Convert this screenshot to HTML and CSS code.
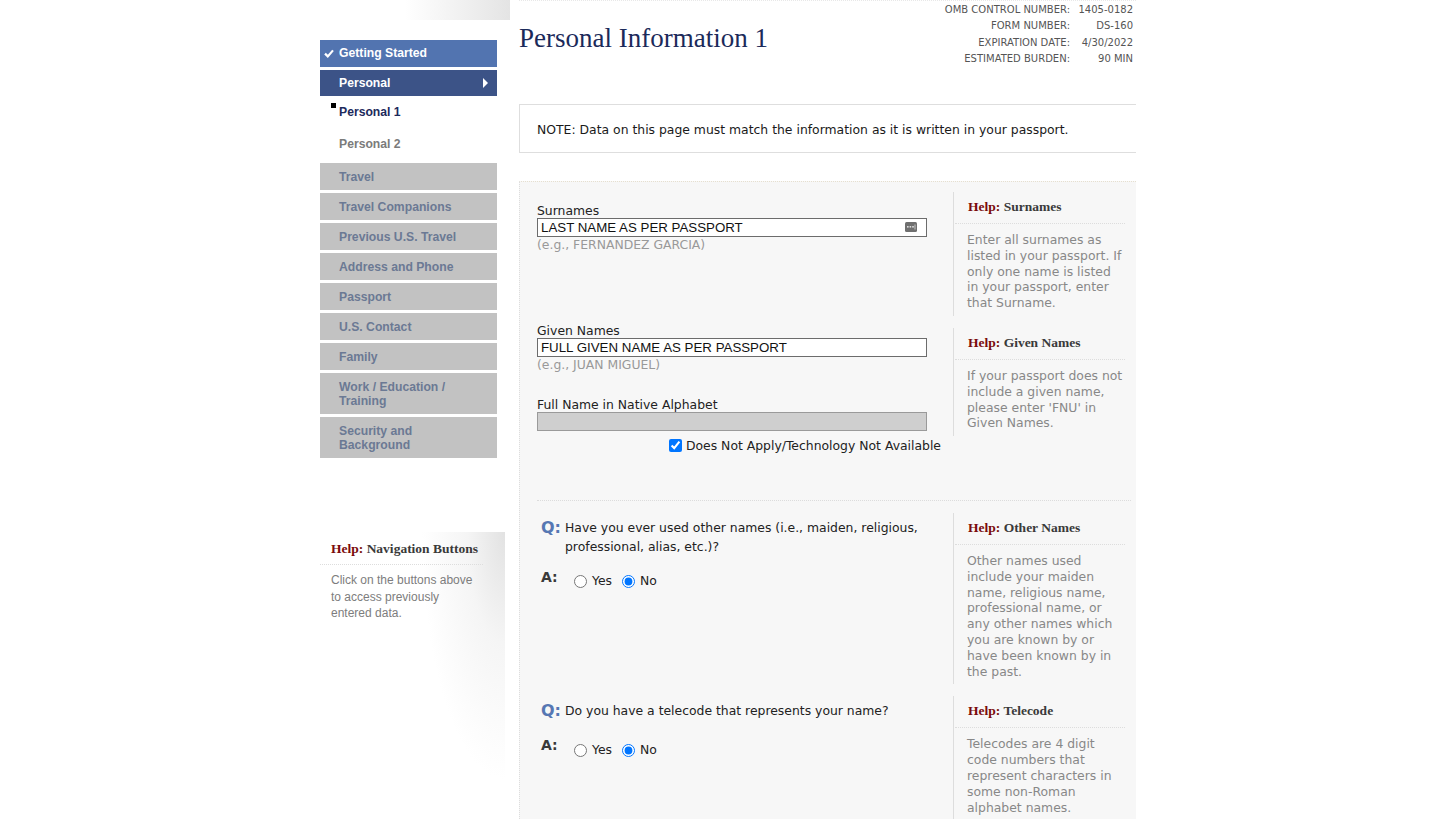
FILE: index.html
```html
<!DOCTYPE html>
<html lang="en">
<head>
    <meta charset="UTF-8">
    <title>DS-160 Personal Information 1</title>
    <link rel="stylesheet" href="styles.css">
</head>
<body>
    <div class="page">
        <aside class="sidebar">
            <div class="side-top"></div>
            <nav class="side-nav">
                <div class="nav-done">
                    <svg class="nav-check" width="10" height="9" viewBox="0 0 10 9"><path d="M1 4.6 L3.8 7.4 L9 1.4" fill="none" stroke="#fff" stroke-width="2.2"/></svg>
                    Getting Started
                </div>
                <div class="nav-current">Personal<span class="nav-arrow"></span></div>
                <div class="nav-sub nav-sub-active"><span class="nav-bullet"></span>Personal 1</div>
                <div class="nav-sub nav-sub-last">Personal 2</div>
                <div class="nav-item">Travel</div>
                <div class="nav-item">Travel Companions</div>
                <div class="nav-item">Previous U.S. Travel</div>
                <div class="nav-item">Address and Phone</div>
                <div class="nav-item">Passport</div>
                <div class="nav-item">U.S. Contact</div>
                <div class="nav-item">Family</div>
                <div class="nav-item">Work / Education / Training</div>
                <div class="nav-item">Security and Background</div>
            </nav>
            <div class="side-help">
                <div class="side-help-title"><span class="help-word">Help:</span> Navigation Buttons</div>
                <p class="side-help-text">Click on the buttons above to access previously entered data.</p>
            </div>
        </aside>

        <main class="content">
            <div class="content-header">
                <h1 class="page-title">Personal Information 1</h1>
                <table class="form-meta">
                    <tr><td>OMB CONTROL NUMBER:</td><td>1405-0182</td></tr>
                    <tr><td>FORM NUMBER:</td><td>DS-160</td></tr>
                    <tr><td>EXPIRATION DATE:</td><td>4/30/2022</td></tr>
                    <tr><td>ESTIMATED BURDEN:</td><td>90 MIN</td></tr>
                </table>
            </div>

            <div class="note">NOTE: Data on this page must match the information as it is written in your passport.</div>

            <div class="form-area">
                <div class="form-row row-surname">
                    <div class="field-col">
                        <label class="field-label">Surnames</label>
                        <div class="input-wrap">
                            <input class="text-input" type="text" value="LAST NAME AS PER PASSPORT">
                            <svg class="autofill-icon" width="12" height="10" viewBox="0 0 12 10"><rect x="0" y="0" width="12" height="10" rx="1.5" fill="#6f6f6f"/><rect x="2" y="4" width="1.6" height="1.6" fill="#ddd"/><rect x="4.6" y="4" width="1.6" height="1.6" fill="#ddd"/><rect x="7.2" y="4" width="1.6" height="1.6" fill="#ddd"/><rect x="9.6" y="2.5" width="0.8" height="5" fill="#ddd"/></svg>
                        </div>
                        <div class="field-example">(e.g., FERNANDEZ GARCIA)</div>
                    </div>
                    <div class="help-box">
                        <div class="help-title"><span class="help-word">Help:</span> Surnames</div>
                        <p class="help-text">Enter all surnames as listed in your passport. If only one name is listed in your passport, enter that Surname.</p>
                    </div>
                </div>

                <div class="form-row row-given">
                    <div class="field-col">
                        <label class="field-label">Given Names</label>
                        <input class="text-input" type="text" value="FULL GIVEN NAME AS PER PASSPORT">
                        <div class="field-example">(e.g., JUAN MIGUEL)</div>
                        <label class="field-label native-label">Full Name in Native Alphabet</label>
                        <input class="text-input input-disabled" type="text" disabled>
                        <div class="na-row">
                            <input type="checkbox" checked>
                            <span>Does Not Apply/Technology Not Available</span>
                        </div>
                    </div>
                    <div class="help-box help-given">
                        <div class="help-title"><span class="help-word">Help:</span> Given Names</div>
                        <p class="help-text">If your passport does not include a given name, please enter 'FNU' in Given Names.</p>
                    </div>
                </div>

                <div class="separator"></div>

                <div class="form-row row-question">
                    <div class="field-col question-col">
                        <div class="question">
                            <span class="q-mark">Q:</span>
                            <span class="q-text">Have you ever used other names (i.e., maiden, religious, professional, alias, etc.)?</span>
                        </div>
                        <div class="answer">
                            <span class="a-mark">A:</span>
                            <label class="radio"><input type="radio" name="other"> Yes</label>
                            <label class="radio"><input type="radio" name="other" checked> No</label>
                        </div>
                    </div>
                    <div class="help-box">
                        <div class="help-title"><span class="help-word">Help:</span> Other Names</div>
                        <p class="help-text">Other names used include your maiden name, religious name, professional name, or any other names which you are known by or have been known by in the past.</p>
                    </div>
                </div>

                <div class="form-row row-question">
                    <div class="field-col question-col">
                        <div class="question">
                            <span class="q-mark">Q:</span>
                            <span class="q-text">Do you have a telecode that represents your name?</span>
                        </div>
                        <div class="answer answer-wide">
                            <span class="a-mark">A:</span>
                            <label class="radio"><input type="radio" name="telecode"> Yes</label>
                            <label class="radio"><input type="radio" name="telecode" checked> No</label>
                        </div>
                    </div>
                    <div class="help-box">
                        <div class="help-title"><span class="help-word">Help:</span> Telecode</div>
                        <p class="help-text">Telecodes are 4 digit code numbers that represent characters in some non-Roman alphabet names.</p>
                    </div>
                </div>
            </div>
        </main>
    </div>
</body>
</html>
```

FILE: styles.css
```css
* {
    box-sizing: border-box;
}

body {
    margin: 0;
    background: #fff;
    font-family: "DejaVu Sans", Verdana, sans-serif;
    overflow: hidden;
}

.page {
    width: 816px;
    margin: 0 auto;
    display: flex;
    align-items: flex-start;
}

/* ---------- sidebar ---------- */

.sidebar {
    width: 199px;
    flex: none;
}

.side-top {
    width: 105px;
    height: 20px;
    margin-left: 85px;
    background: linear-gradient(to right, #fff, #e4e4e4);
}

.side-nav {
    width: 177px;
    margin-top: 20px;
    font-family: "Liberation Sans", Arial, sans-serif;
    font-size: 12.2px;
    font-weight: bold;
}

.nav-done {
    height: 27px;
    line-height: 27px;
    padding-left: 4px;
    background: #5274b0;
    color: #fff;
    margin-bottom: 3px;
    display: flex;
    align-items: center;
}

.nav-check {
    margin-right: 5px;
}

.nav-current {
    height: 26px;
    line-height: 26px;
    padding-left: 19px;
    background: #3c5387;
    color: #fff;
    position: relative;
}

.nav-arrow {
    position: absolute;
    right: 9px;
    top: 8px;
    border-left: 5px solid #fff;
    border-top: 5px solid transparent;
    border-bottom: 5px solid transparent;
}

.nav-sub {
    height: 32px;
    line-height: 33px;
    padding-left: 19px;
    color: #7b7b7b;
}

.nav-sub-active {
    padding-left: 11px;
    color: #1c2a5c;
}

.nav-sub-last {
    margin-bottom: 3px;
}

.nav-bullet {
    display: inline-block;
    width: 5px;
    height: 5px;
    background: #000;
    margin-right: 3px;
    vertical-align: 8px;
}

.nav-item {
    padding: 6.5px 19px;
    line-height: 14px;
    background: #c2c2c2;
    color: #6b7994;
    margin-bottom: 3px;
}

.side-help {
    width: 185px;
    height: 247px;
    margin-top: 74px;
    padding-top: 8px;
    background: radial-gradient(ellipse 45% 100% at 100% 0, #e2e2e2 0%, #f5f5f5 45%, #fff 100%);
}

.side-help-title {
    width: 163px;
    padding: 0 0 6px 11px;
    line-height: 18px;
    font-family: "Liberation Serif", "Times New Roman", serif;
    font-size: 13.5px;
    font-weight: bold;
    color: #3a3a3a;
    border-bottom: 1px dotted #ddd;
}

.help-word {
    color: #7a0b0b;
}

.side-help-text {
    margin: 7px 0 0;
    padding-left: 11px;
    padding-right: 24px;
    font-family: "Liberation Sans", Arial, sans-serif;
    font-size: 12px;
    line-height: 16.5px;
    color: #7d7d7d;
}

/* ---------- content ---------- */

.content {
    width: 617px;
}

.content-header {
    display: flex;
    justify-content: space-between;
    align-items: flex-start;
    height: 104px;
    border-top: 1px dotted #e8e8e8;
}

.page-title {
    margin: 19px 0 0;
    font-family: "Liberation Serif", "Times New Roman", serif;
    font-size: 27px;
    font-weight: normal;
    line-height: 36px;
    color: #1b2a5a;
}

.form-meta {
    border-collapse: collapse;
    margin-right: 3px;
    font-size: 10px;
    color: #555;
}

.form-meta td {
    padding: 0;
    height: 16.5px;
    text-align: right;
    white-space: nowrap;
}

.form-meta td + td {
    padding-left: 7px;
    width: 63px;
}

.note {
    height: 49px;
    line-height: 49px;
    padding-left: 17px;
    border: 1px solid #dedede;
    border-right: none;
    font-size: 12.4px;
    color: #1a1a1a;
}

.form-area {
    margin-top: 28px;
    min-height: 700px;
    padding: 10px 11px 0 17px;
    background: #f7f7f7;
    border-top: 1px dotted #e6dfcf;
    border-left: 1px dotted #ddd;
}

.form-row {
    display: flex;
    align-items: flex-start;
}

.field-col {
    width: 404px;
    flex: none;
}

.row-surname .field-col {
    margin-top: 11px;
}

.row-given {
    margin-top: 7px;
}

.help-given {
    margin-top: 5px;
}

.field-label {
    display: block;
    font-size: 12.4px;
    line-height: 15px;
    color: #222;
}

.native-label {
    margin-top: 25px;
}

.input-wrap {
    position: relative;
    width: 390px;
}

.text-input {
    display: block;
    width: 390px;
    height: 19px;
    margin: 0;
    padding: 0 3px;
    border: 1px solid #6c6c6c;
    background: #fff;
    font-family: "Liberation Sans", Arial, sans-serif;
    font-size: 13.3px;
    color: #111;
    outline: none;
}

.input-disabled {
    background: #cfcfcf;
    border-color: #9a9a9a;
}

.autofill-icon {
    position: absolute;
    right: 10px;
    top: 4px;
}

.field-example {
    font-size: 12.4px;
    line-height: 15px;
    color: #999;
}

.na-row {
    display: flex;
    justify-content: flex-end;
    align-items: center;
    margin-top: 5px;
    height: 20px;
    font-size: 12.4px;
    color: #222;
}

.na-row input {
    margin: 0 4px 0 0;
    width: 13px;
    height: 13px;
}

.separator {
    margin: 44px -6px 0 0;
    border-top: 1px dotted #dcdcdc;
}

.row-question {
    margin-top: 12px;
}

.question-col {
    padding-top: 5px;
}

.question {
    display: flex;
    align-items: flex-start;
    padding-left: 4px;
}

.q-mark {
    width: 24px;
    flex: none;
    font-family: "DejaVu Sans", Verdana, sans-serif;
    font-size: 16px;
    font-weight: bold;
    line-height: 19px;
    color: #5677b3;
}

.q-text {
    font-size: 12.4px;
    line-height: 19px;
    color: #222;
    padding-right: 10px;
}

.answer {
    display: flex;
    align-items: center;
    margin-top: 12px;
    padding-left: 4px;
    height: 26px;
    font-size: 12.4px;
    color: #222;
}

.answer-wide {
    margin-top: 16px;
}

.a-mark {
    width: 31px;
    flex: none;
    align-self: flex-start;
    line-height: 18px;
    font-size: 14px;
    font-weight: bold;
    color: #3a3a3a;
}

.radio {
    display: flex;
    align-items: center;
    margin-right: 8px;
}

.radio input {
    margin: 2px 5px 0 2px;
    width: 13px;
    height: 13px;
}

/* ---------- help boxes ---------- */

.help-box {
    width: 172px;
    margin-left: 12px;
    border-left: 1px solid #ddd;
}

.help-title {
    padding: 6px 0 7px 13px;
    margin-left: 1px;
    line-height: 18px;
    font-family: "Liberation Serif", "Times New Roman", serif;
    font-size: 13.5px;
    font-weight: bold;
    color: #3a3a3a;
    border-bottom: 1px dotted #ddd;
}

.help-text {
    margin: 0;
    padding: 8px 1px 5px 13px;
    font-size: 12.4px;
    line-height: 15.8px;
    color: #888;
}
```
